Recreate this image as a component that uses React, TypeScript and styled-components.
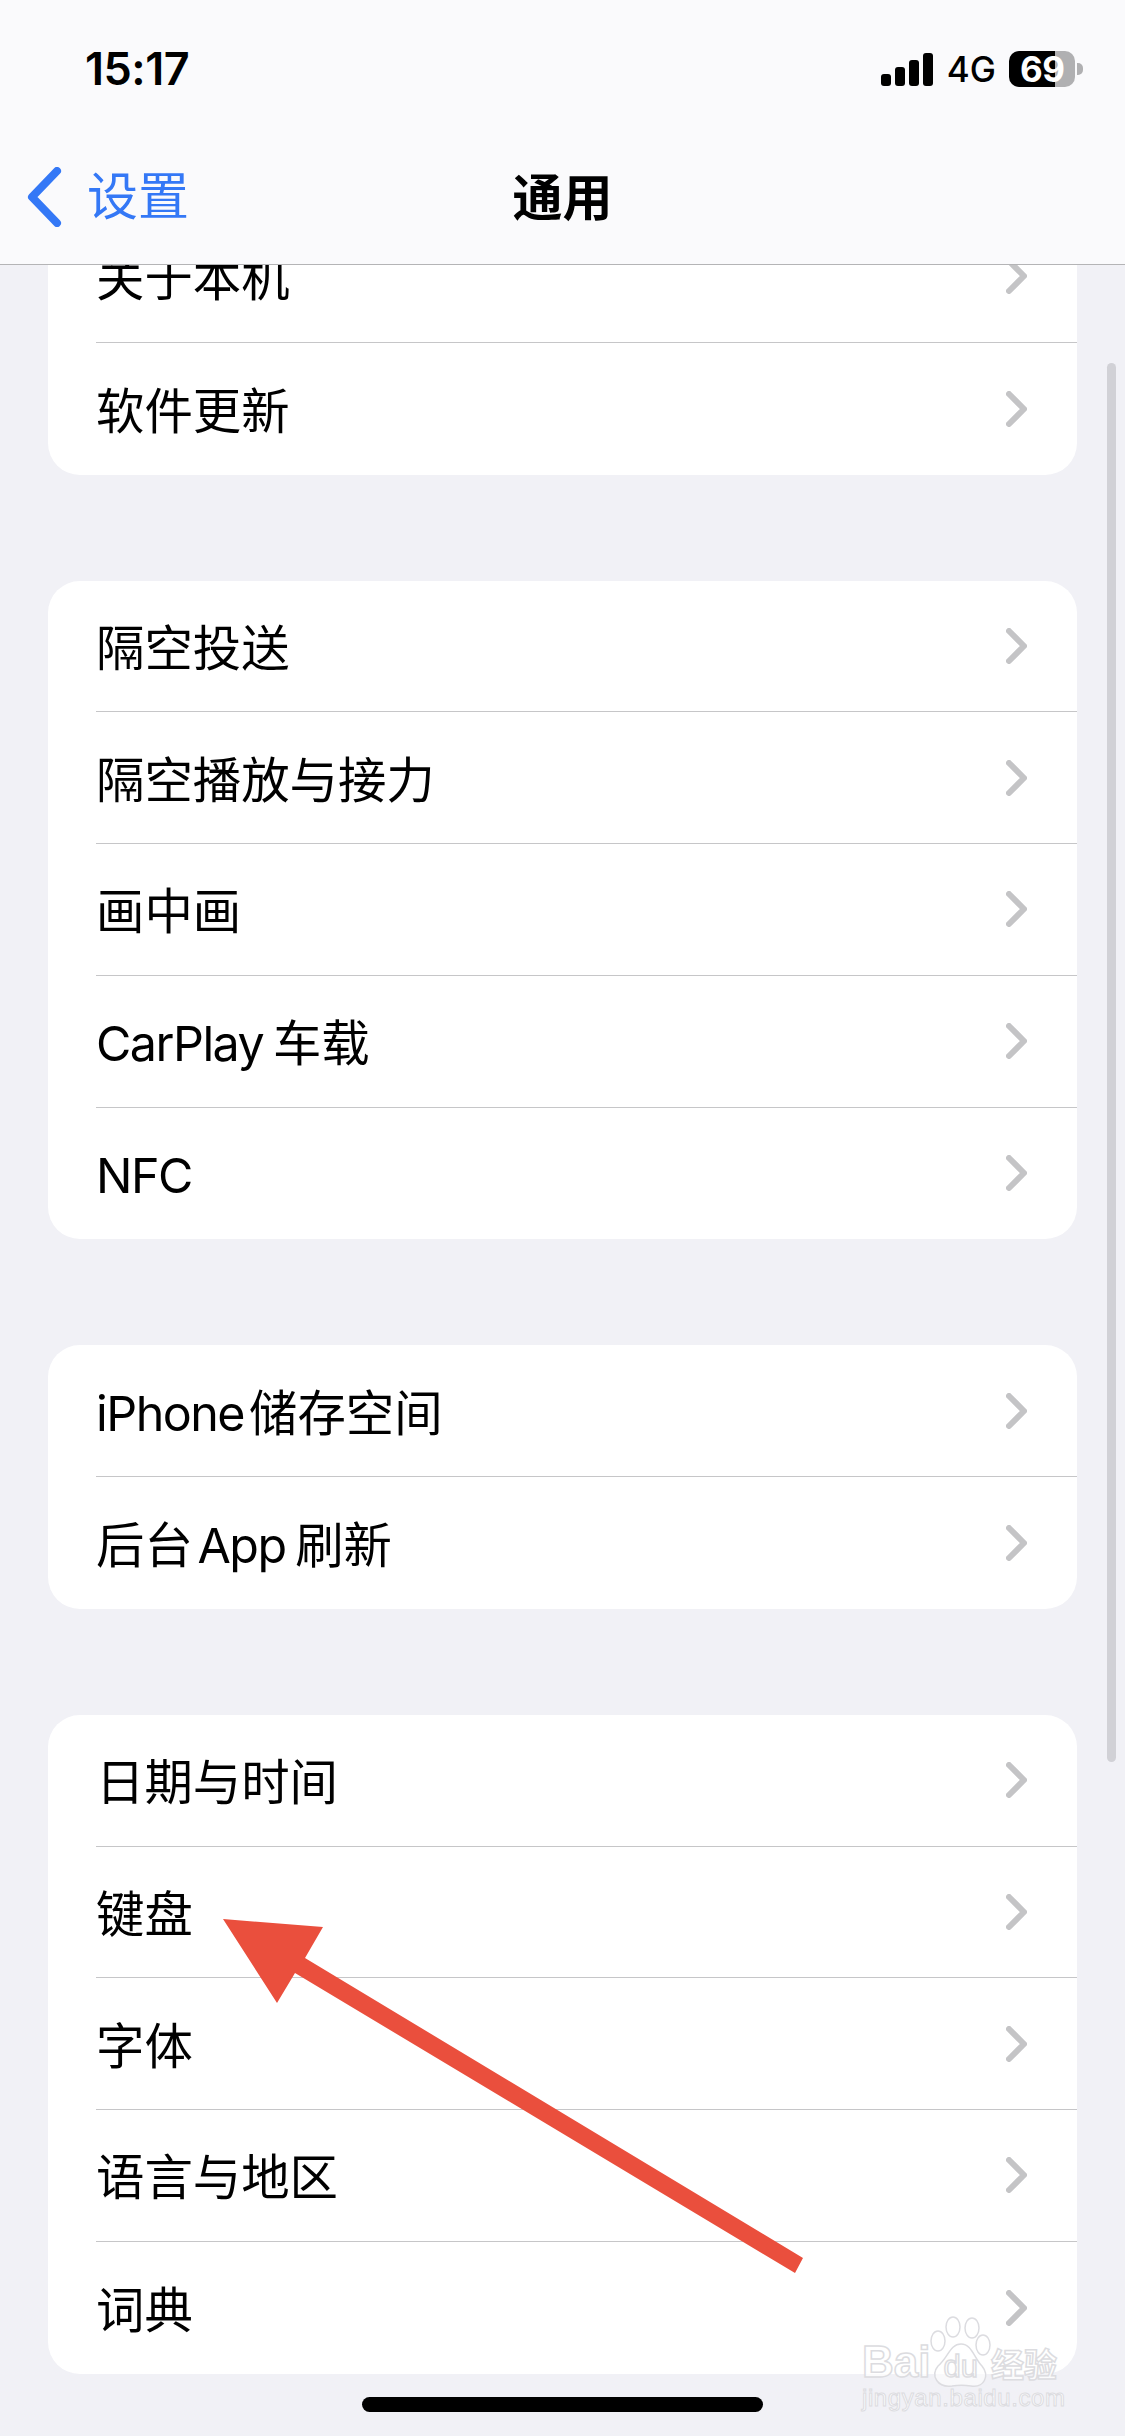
import styled, { createGlobalStyle } from "styled-components";

const GlobalStyle = createGlobalStyle`
  html, body {
    margin: 0;
    padding: 0;
    background: #f1f1f6;
  }
  * {
    box-sizing: border-box;
  }
`;

const FONT = `Inter, "Noto Sans CJK SC", sans-serif`;

const Screen = styled.div`
  position: relative;
  width: 1125px;
  height: 2436px;
  overflow: hidden;
  background: #f1f1f6;
  font-family: ${FONT};
  color: #000;
`;

const Header = styled.header`
  height: 265px;
  background: #fafafc;
  border-bottom: 1px solid #b4b4b6;
  display: flex;
  flex-direction: column;
`;

const StatusBar = styled.div`
  height: 138px;
  padding: 0 42px 0 85px;
  display: flex;
  align-items: flex-start;
  justify-content: space-between;
`;

const Time = styled.div`
  margin-top: 43px;
  font-size: 45px;
  line-height: 52px;
  font-weight: 600;
  letter-spacing: -0.5px;
`;

const StatusIcons = styled.div`
  margin-top: 51px;
  display: flex;
  align-items: center;
  height: 36px;
`;

const Network = styled.span`
  margin: 0 13px 0 14px;
  font-size: 35px;
  line-height: 36px;
  font-weight: 500;
`;

const Battery = styled.div`
  width: 66px;
  height: 36px;
  border-radius: 10px;
  background: linear-gradient(90deg, #000 0 46px, #b0b0b2 46px);
  color: #fff;
  font-size: 35px;
  line-height: 36px;
  font-weight: 700;
  letter-spacing: -0.5px;
  white-space: nowrap;
  padding-left: 11px;
`;

const BatteryNub = styled.div`
  width: 6px;
  height: 12px;
  margin-left: 2px;
  border-radius: 0 5px 5px 0;
  background: #b0b0b2;
`;

const NavBar = styled.div`
  position: relative;
  flex: 1;
  display: flex;
  align-items: flex-start;
  justify-content: center;
`;

const BackButton = styled.div`
  position: absolute;
  left: 26px;
  top: 29px;
  display: flex;
  align-items: center;
  gap: 25px;
  color: #3478f6;
  font-size: 51px;
  line-height: 60px;
`;

const Title = styled.div`
  margin-top: 30px;
  font-size: 50px;
  line-height: 60px;
  font-weight: 700;
`;

const ScrollArea = styled.main`
  height: 2171px;
  overflow: hidden;
`;

const List = styled.div`
  margin: -54px 48px 0;
  display: flex;
  flex-direction: column;
  gap: 106px;
`;

const Card = styled.section`
  background: #fff;
  border-radius: 32px;
  overflow: hidden;
`;

const Row = styled.div`
  padding-left: 48px;
`;

const RowInner = styled.div<{ $last: boolean }>`
  height: 131.75px;
  padding-right: 50px;
  display: flex;
  align-items: center;
  justify-content: space-between;
  border-bottom: ${(p) => (p.$last ? "none" : "1.5px solid #c6c6c8")};
`;

const RowLabel = styled.span`
  padding-top: 6px;
  font-size: 48.4px;
  line-height: 60px;
  font-weight: 400;
  word-spacing: -9px;
`;

const Latin = styled.span`
  margin-right: 5px;
  letter-spacing: -1.5px;
`;

const ScrollBar = styled.div`
  position: absolute;
  left: 1107px;
  top: 363px;
  width: 9px;
  height: 1399px;
  border-radius: 5px;
  background: #d1d1d6;
`;

const HomeIndicator = styled.div`
  position: absolute;
  left: 362px;
  top: 2397px;
  width: 401px;
  height: 15px;
  border-radius: 8px;
  background: #000;
`;

const ArrowOverlay = styled.svg`
  position: absolute;
  left: 0;
  top: 0;
  pointer-events: none;
`;

const Watermark = styled.div`
  position: absolute;
  left: 862px;
  top: 2316px;
  width: 204px;
  height: 96px;
`;

const PawIcon = styled.svg`
  position: absolute;
  left: 66px;
  top: 0;
`;

const WatermarkLine = styled.div`
  position: absolute;
  left: 0;
  top: 23px;
  width: 204px;
  display: flex;
  align-items: baseline;
  font-family: "Liberation Sans", "Noto Sans CJK SC", sans-serif;
  font-size: 44px;
  line-height: 46px;
  font-weight: 700;
  color: rgba(255, 255, 255, 0.75);
  -webkit-text-stroke: 1.5px #dcdce0;
`;

const WatermarkDu = styled.span`
  margin-left: 13px;
  font-size: 31px;
  font-weight: 400;
`;

const WatermarkCn = styled.span`
  margin-left: 13px;
  font-size: 33px;
`;

const WatermarkUrl = styled.div`
  position: absolute;
  left: 0;
  top: 68px;
  font-family: "Liberation Sans", sans-serif;
  font-size: 24px;
  line-height: 28px;
  letter-spacing: 0.6px;
  white-space: nowrap;
  color: rgba(255, 255, 255, 0.75);
  -webkit-text-stroke: 1px #dcdce0;
`;

const groups = [
  ["关于本机", "软件更新"],
  ["隔空投送", "隔空播放与接力", "画中画", "CarPlay 车载", "NFC"],
  ["iPhone储存空间", "后台 App 刷新"],
  ["日期与时间", "键盘", "字体", "语言与地区", "词典"],
];

function Chevron() {
  return (
    <svg width="21" height="36" viewBox="0 0 21 36" fill="none">
      <path d="M3 3 L18 18 L3 33" stroke="#c4c4c6" strokeWidth="6" strokeLinecap="round" strokeLinejoin="round" />
    </svg>
  );
}

function BackChevron() {
  return (
    <svg width="36" height="60" viewBox="0 0 36 60" fill="none">
      <path d="M31 4 L6 30 L31 56" stroke="#3478f6" strokeWidth="8" strokeLinecap="round" strokeLinejoin="round" />
    </svg>
  );
}

function SignalIcon() {
  return (
    <svg width="52" height="33" viewBox="0 0 52 33" fill="#000">
      <rect x="0" y="21" width="10" height="12" rx="3" />
      <rect x="14" y="14" width="10" height="19" rx="3" />
      <rect x="28" y="7" width="10" height="26" rx="3" />
      <rect x="42" y="0" width="10" height="33" rx="3" />
    </svg>
  );
}

// latin words run tighter than the CJK text in the reference
function Label({ text }: { text: string }) {
  return (
    <RowLabel>
      {text.split(/([A-Za-z]+)/).map((part, i) =>
        i % 2 === 1 ? <Latin key={i}>{part}</Latin> : part
      )}
    </RowLabel>
  );
}

export default function App() {
  return (
    <>
      <GlobalStyle />
      <Screen>
        <Header>
          <StatusBar>
            <Time>15:17</Time>
            <StatusIcons>
              <SignalIcon />
              <Network>4G</Network>
              <Battery>69</Battery>
              <BatteryNub />
            </StatusIcons>
          </StatusBar>
          <NavBar>
            <BackButton>
              <BackChevron />
              设置
            </BackButton>
            <Title>通用</Title>
          </NavBar>
        </Header>
        <ScrollArea>
          <List>
            {groups.map((items) => (
              <Card key={items[0]}>
                {items.map((label, i) => (
                  <Row key={label}>
                    <RowInner $last={i === items.length - 1}>
                      <Label text={label} />
                      <Chevron />
                    </RowInner>
                  </Row>
                ))}
              </Card>
            ))}
          </List>
        </ScrollArea>
        <ScrollBar />
        <HomeIndicator />
        <ArrowOverlay width="1125" height="2436" viewBox="0 0 1125 2436">
          <path
            d="M223 1919 L323 1927 L305 1958 L803 2258 L795 2273 L295 1973 L277 2003 Z"
            fill="#ea4f3d"
          />
        </ArrowOverlay>
        <Watermark>
          <PawIcon width="100" height="80" viewBox="0 0 100 80" fill="rgba(255,255,255,0.6)" stroke="#dcdce0" strokeWidth="1.5">
            <ellipse cx="25" cy="11" rx="7" ry="10" />
            <ellipse cx="44" cy="12" rx="7" ry="10" />
            <ellipse cx="10" cy="25" rx="7" ry="10" />
            <ellipse cx="55" cy="29" rx="7" ry="10" />
            <path d="M33 28 C22 28 20 42 10 50 C2 60 10 72 24 70 C30 69 37 69 43 70 C56 72 62 60 54 50 C46 42 44 28 33 28 Z" />
          </PawIcon>
          <WatermarkLine>
            Bai
            <WatermarkDu>du</WatermarkDu>
            <WatermarkCn>经验</WatermarkCn>
          </WatermarkLine>
          <WatermarkUrl>jingyan.baidu.com</WatermarkUrl>
        </Watermark>
      </Screen>
    </>
  );
}
